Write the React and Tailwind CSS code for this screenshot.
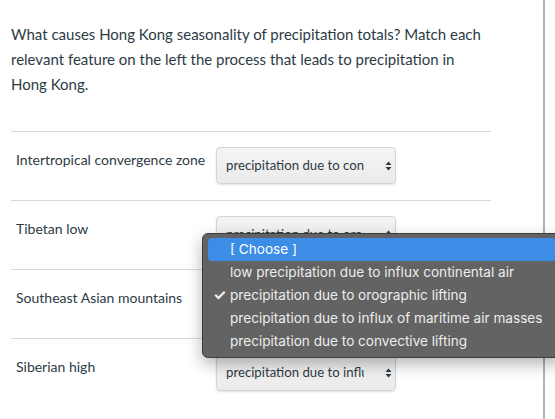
import React from 'react';

const rows = [
  { label: 'Intertropical convergence zone', value: 'precipitation due to convective lifting' },
  { label: 'Tibetan low', value: 'precipitation due to orographic lifting' },
  { label: 'Southeast Asian mountains', value: 'precipitation due to orographic lifting' },
  { label: 'Siberian high', value: 'precipitation due to influx of maritime air masses' },
];

const options = [
  '[ Choose ]',
  'low precipitation due to influx continental air',
  'precipitation due to orographic lifting',
  'precipitation due to influx of maritime air masses',
  'precipitation due to convective lifting',
];

function SelectBox({ value }) {
  return (
    <div className="flex items-center w-[180px] h-[37px] rounded-[4px] border border-[#d3d6d9] bg-gradient-to-b from-[#f4f4f4] to-[#ebebeb] shadow-[0_1px_2px_rgba(0,0,0,0.12)] pl-[9px] pr-[3px]">
      <span className="w-[138px] pt-[1px] overflow-hidden whitespace-nowrap text-[13.2px] text-[#2d3b45] [text-overflow:clip]">
        {value}
      </span>
      <span className="flex-1" />
      <svg width="7" height="12" viewBox="0 0 7 12" className="shrink-0" aria-hidden="true">
        <path d="M3.5 1.5 L6.5 5 H0.5 Z" fill="#2d3b45" />
        <path d="M3.5 10.5 L6.5 7 H0.5 Z" fill="#2d3b45" />
      </svg>
    </div>
  );
}

export default function App() {
  return (
    <div className="relative w-[555px] h-[419px] overflow-hidden bg-white font-['Lato',sans-serif]">
      <div className="flex h-full">
        <div className="w-[543px] h-full pl-[11px] pr-[52px] pt-[22px]">
          <p className="text-[15px] leading-[25px] text-[#2d3b45]">
            What causes Hong Kong seasonality of precipitation totals? Match each relevant feature on the left the process that leads to precipitation in Hong Kong.
          </p>
          <div className="mt-[34px]">
            {rows.map((row, i) => (
              <div
                key={row.label}
                className={`flex items-start border-t border-[#d5d9dc] pl-[5px] pt-[15px] ${i === rows.length - 1 ? '' : 'pb-[16px]'}`}
              >
                <div className="w-[200px] pt-[3px] text-[14px] leading-[20px] text-[#2d3b45]">{row.label}</div>
                <SelectBox value={row.value} />
              </div>
            ))}
          </div>
        </div>
        <div className="w-[2px] h-full bg-[#b3b3b3]" />
      </div>

      {/* native select menu, open over the second row */}
      <div className="absolute left-[202px] top-[233px] w-[360px] rounded-[6px] border border-[#3d3d3d] bg-[#636363] shadow-[0_6px_16px_rgba(0,0,0,0.3)] py-[4px] font-['Inter','Liberation_Sans',sans-serif] text-[13.6px] text-[#ededed]">
        {options.map((opt, i) => (
          <div key={opt} className="px-[5px]">
            <div
              className={`relative flex items-center h-[23px] pl-[22px] rounded-[4px] ${i === 0 ? 'bg-[#3b8de6] text-white' : ''}`}
            >
              {i === 2 && <span className="absolute left-[5px] text-[15px] font-bold">✓</span>}
              <span className="whitespace-nowrap">{opt}</span>
            </div>
          </div>
        ))}
      </div>
    </div>
  );
}
